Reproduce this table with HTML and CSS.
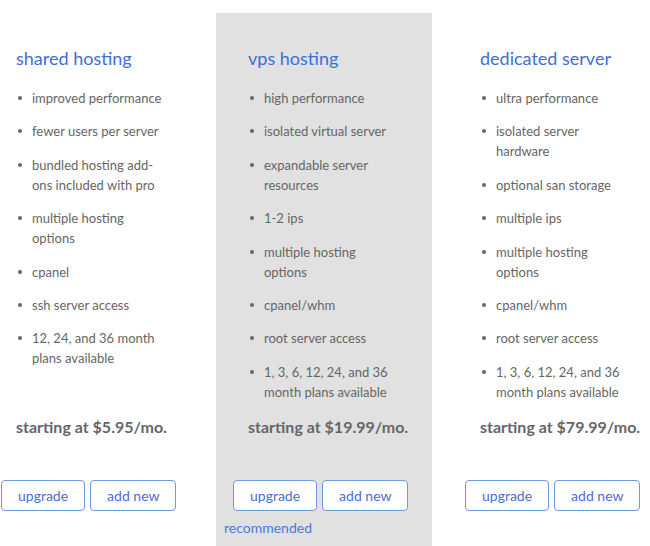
FILE: index.html
```html
<!DOCTYPE html>
<html lang="en">
<head>
    <meta charset="UTF-8">
    <meta name="viewport" content="width=device-width, initial-scale=1.0">
    <title>Hosting Plans</title>
    <link rel="stylesheet" href="styles.css">
</head>
<body>
    <div class="plans">
        <div class="plan">
            <h2 class="plan-title">shared hosting</h2>
            <ul class="features">
                <li>improved performance</li>
                <li>fewer users per server</li>
                <li>bundled hosting add-ons included with pro</li>
                <li>multiple hosting options</li>
                <li>cpanel</li>
                <li>ssh server access</li>
                <li>12, 24, and 36 month plans available</li>
            </ul>
            <p class="price">starting at $5.95/mo.</p>
            <div class="actions">
                <button class="btn">upgrade</button>
                <button class="btn">add new</button>
            </div>
        </div>

        <div class="plan featured">
            <h2 class="plan-title">vps hosting</h2>
            <ul class="features">
                <li>high performance</li>
                <li>isolated virtual server</li>
                <li>expandable server resources</li>
                <li>1-2 ips</li>
                <li>multiple hosting options</li>
                <li>cpanel/whm</li>
                <li>root server access</li>
                <li>1, 3, 6, 12, 24, and 36 month plans available</li>
            </ul>
            <p class="price">starting at $19.99/mo.</p>
            <div class="actions">
                <button class="btn">upgrade</button>
                <button class="btn">add new</button>
            </div>
            <div class="tag">recommended</div>
        </div>

        <div class="plan">
            <h2 class="plan-title">dedicated server</h2>
            <ul class="features">
                <li>ultra performance</li>
                <li>isolated server hardware</li>
                <li>optional san storage</li>
                <li>multiple ips</li>
                <li>multiple hosting options</li>
                <li>cpanel/whm</li>
                <li>root server access</li>
                <li>1, 3, 6, 12, 24, and 36 month plans available</li>
            </ul>
            <p class="price">starting at $79.99/mo.</p>
            <div class="actions">
                <button class="btn">upgrade</button>
                <button class="btn">add new</button>
            </div>
        </div>
    </div>
</body>
</html>
```

FILE: styles.css
```css
body {
    margin: 0;
    font-family: Lato, "Open Sans", sans-serif;
    color: #666;
    background: #fff;
}
.plans {
    display: grid;
    grid-template-columns: 216px 216px 216px;
    column-gap: 16px;
    margin-top: 13px;
    min-height: 533px;
}
.plan {
    padding: 34px 0 0 16px;
}
.featured {
    margin-left: -16px;
    margin-right: 16px;
    padding-left: 32px;
    background: #e1e1e1;
}
.plan-title {
    margin: 0 0 19px;
    font-size: 18px;
    line-height: 22px;
    font-weight: normal;
    color: #3c6fd8;
}
.features {
    list-style: none;
    margin: 0 0 12px;
    padding: 0;
    max-width: 151px;
    min-height: 317px;
    font-size: 13px;
    line-height: 20px;
}
.features li {
    position: relative;
    padding-left: 16px;
    margin-bottom: 13.4px;
}
.features li::before {
    content: "";
    position: absolute;
    left: 2px;
    top: 8px;
    width: 4px;
    height: 4px;
    border-radius: 50%;
    background: #666;
}
.price {
    margin: 0 0 43px;
    font-size: 16px;
    line-height: 20px;
    font-weight: bold;
}
.actions {
    display: flex;
    gap: 5px;
    margin-left: -15px;
}
.btn {
    height: 31px;
    padding: 0 16px;
    background: #fff;
    border: 1px solid #6f98e2;
    border-radius: 4px;
    font-family: inherit;
    font-size: 14px;
    color: #4a6fcf;
}
.tag {
    margin: 7px 0 0 -24px;
    font-size: 14px;
    line-height: 20px;
    color: #4a7ad8;
}
```
